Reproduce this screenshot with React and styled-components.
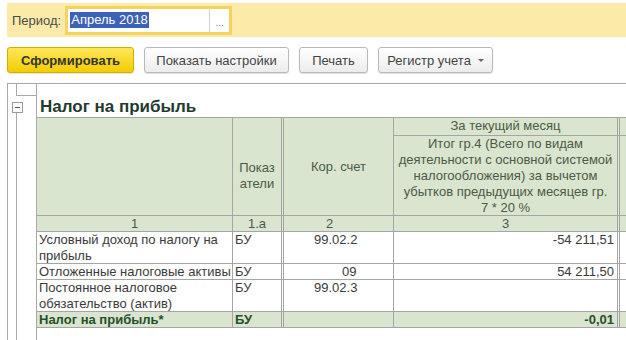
import React from "react";
import styled, { createGlobalStyle, css } from "styled-components";

const Global = createGlobalStyle`
  html, body { margin: 0; padding: 0; background: #fff; overflow: hidden; }
  body { font-family: "Liberation Sans", Arial, sans-serif; }
  #root { height: 100vh; }
`;

const Page = styled.div`
  height: 100vh;
  display: flex;
  flex-direction: column;
  font-family: "Liberation Sans", Arial, sans-serif;
  font-size: 13px;
  color: #333;
`;

const Band = styled.div`
  margin: 3px 0 0 7px;
  height: 34px;
  background: #fbeaa8;
  display: flex;
  align-items: center;
  padding-left: 5px;
  gap: 4px;
`;

const Label = styled.span`
  color: #4a4a4a;
  font-size: 13px;
`;

const Field = styled.div`
  box-sizing: border-box;
  width: 167px;
  height: 29px;
  border: 3px solid #f4d361;
  background: #fff;
  display: flex;
  align-items: stretch;
`;

const FieldValue = styled.div`
  flex: 1;
  display: flex;
  align-items: center;
  padding-left: 2px;
`;

const Selected = styled.span`
  background: #3b62b8;
  color: #fff;
  line-height: 16px;
  padding: 0 1px;
`;

const Ellipsis = styled.div`
  width: 20px;
  border-left: 1px solid #cfcfcf;
  color: #777;
  font-size: 10px;
  display: flex;
  align-items: flex-end;
  justify-content: center;
  padding-bottom: 4px;
  box-sizing: border-box;
`;

const Buttons = styled.div`
  margin-top: 10px;
  padding-left: 7px;
  display: flex;
  gap: 10px;
`;

const Button = styled.button`
  box-sizing: border-box;
  width: ${(p) => p.$w}px;
  height: 26px;
  padding: 0;
  font-family: "Liberation Sans", Arial, sans-serif;
  font-size: 13px;
  color: #444;
  border: 1px solid #b9b9b9;
  border-radius: 3px;
  background: linear-gradient(#ffffff, #ececec);
  box-shadow: 0 1px 1px rgba(0, 0, 0, 0.12);
  display: flex;
  align-items: center;
  justify-content: center;
  gap: 7px;
  white-space: nowrap;
  ${(p) =>
    p.$primary &&
    css`
      font-weight: bold;
      color: #333;
      border-color: #d2b000;
      background: linear-gradient(#fde75a, #f3cc00);
    `}
`;

const Caret = styled.span`
  width: 0;
  height: 0;
  border-left: 3px solid transparent;
  border-right: 3px solid transparent;
  border-top: 3px solid #666;
  margin-top: 1px;
`;

const Sheet = styled.div`
  margin: 10px 0 0 7px;
  flex: 1;
  display: flex;
  border-top: 1px solid #a9a9a9;
  border-left: 1px solid #a9a9a9;
`;

const Gutter = styled.div`
  box-sizing: border-box;
  width: 29px;
  border-right: 1px solid #a9a9a9;
  display: flex;
  flex-direction: column;
`;

const GutterHead = styled.div`
  box-sizing: border-box;
  margin-left: 8px;
  height: 12px;
  border-left: 1px solid #a9a9a9;
  border-bottom: 1px solid #a9a9a9;
`;

const Toggle = styled.div`
  box-sizing: border-box;
  margin: 6px 0 0 4px;
  width: 11px;
  height: 11px;
  border: 1px solid #9a9a9a;
  display: flex;
  align-items: center;
  justify-content: center;
  &::after {
    content: "";
    width: 5px;
    height: 1px;
    background: #555;
  }
`;

const GroupLine = styled.div`
  flex: 1;
  margin-left: 8px;
  border-left: 1px solid #a9a9a9;
`;

const Content = styled.div`
  flex: 1;
  display: flex;
  flex-direction: column;
  overflow: hidden;
`;

const Title = styled.div`
  padding: 13px 0 0 3px;
  height: 20px;
  font-size: 17px;
  line-height: 20px;
  font-weight: bold;
  color: #1f3b30;
  white-space: nowrap;
`;

const Table = styled.div`
  display: grid;
  grid-template-columns: 196px 51px 110px 226px 60px;
  grid-template-rows: 18px 80px 16px 32px 16px 32px 16px;
  border-top: 1px solid #a5a5a5;
  font-size: 13px;
  line-height: 16px;
`;

const Cell = styled.div`
  box-sizing: border-box;
  border-right: ${(p) => (p.$double ? "3px double #a5a5a5" : "1px solid #a5a5a5")};
  border-bottom: 1px solid #a5a5a5;
  background: ${(p) => (p.$green ? "#d9e5ce" : "#fff")};
  color: ${(p) => (p.$head ? "#4b5a48" : p.$bold ? "#24502a" : "#3a3a3a")};
  font-weight: ${(p) => (p.$bold ? "bold" : "normal")};
  text-align: ${(p) => p.$align || "left"};
  padding: ${(p) => p.$pt || 0}px ${(p) => p.$pr ?? 2}px 0 ${(p) => p.$pl ?? 2}px;
  white-space: nowrap;
  ${(p) => p.$span && css`grid-row: span ${p.$span};`}
  ${(p) =>
    p.$center &&
    css`
      display: flex;
      flex-direction: column;
      justify-content: center;
    `}
`;

export default function App() {
  return (
    <Page>
      <Global />
      <Band>
        <Label>Период:</Label>
        <Field>
          <FieldValue>
            <Selected>Апрель 2018</Selected>
          </FieldValue>
          <Ellipsis>...</Ellipsis>
        </Field>
      </Band>
      <Buttons>
        <Button $primary $w={127}>Сформировать</Button>
        <Button $w={145}>Показать настройки</Button>
        <Button $w={69}>Печать</Button>
        <Button $w={115}>
          Регистр учета <Caret />
        </Button>
      </Buttons>
      <Sheet>
        <Gutter>
          <GutterHead />
          <Toggle />
          <GroupLine />
        </Gutter>
        <Content>
          <Title>Налог на прибыль</Title>
          <Table>
            <Cell $green $head $span={2} />
            <Cell $green $head $span={2} $double $align="center" $center $pt={18}>
              <span>Показ</span>
              <span>атели</span>
            </Cell>
            <Cell $green $head $span={2} $align="center" $center>
              Кор. счет
            </Cell>
            <Cell $green $head $double $align="center">
              За текущий месяц
            </Cell>
            <Cell $green $head />
            <Cell $green $head $double $align="center">
              Итог гр.4 (Всего по видам
              <br />
              деятельности с основной системой
              <br />
              налогообложения) за вычетом
              <br />
              убытков предыдущих месяцев гр.
              <br />7 * 20 %
            </Cell>
            <Cell $green $head />

            <Cell $green $head $align="center">1</Cell>
            <Cell $green $head $double $align="center">1.а</Cell>
            <Cell $green $head $pl={42}>2</Cell>
            <Cell $green $head $double $align="center">3</Cell>
            <Cell $green $head />

            <Cell>
              Условный доход по налогу на
              <br />
              прибыль
            </Cell>
            <Cell $double>БУ</Cell>
            <Cell $pl={30}>99.02.2</Cell>
            <Cell $double $align="right" $pr={3}>-54 211,51</Cell>
            <Cell />

            <Cell>Отложенные налоговые активы</Cell>
            <Cell $double>БУ</Cell>
            <Cell $pl={58}>09</Cell>
            <Cell $double $align="right" $pr={3}>54 211,50</Cell>
            <Cell />

            <Cell>
              Постоянное налоговое
              <br />
              обязательство (актив)
            </Cell>
            <Cell $double>БУ</Cell>
            <Cell $pl={30}>99.02.3</Cell>
            <Cell $double />
            <Cell />

            <Cell $green $bold>Налог на прибыль*</Cell>
            <Cell $green $bold $double>БУ</Cell>
            <Cell $green />
            <Cell $green $bold $double $align="right" $pr={3}>-0,01</Cell>
            <Cell $green />
          </Table>
        </Content>
      </Sheet>
    </Page>
  );
}
